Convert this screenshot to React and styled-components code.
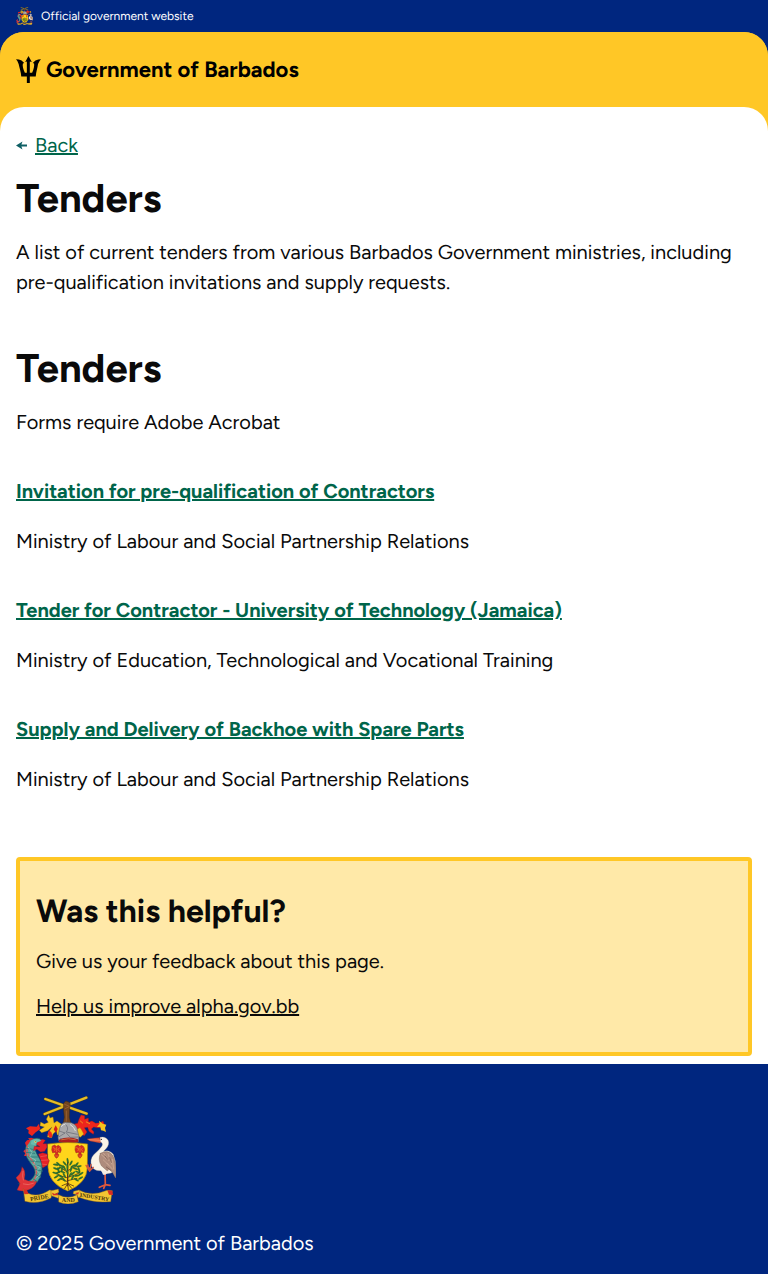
import React from "react";
import styled, { createGlobalStyle } from "styled-components";

const GlobalStyle = createGlobalStyle`
  *, *::before, *::after { box-sizing: border-box; }
  body {
    margin: 0;
    background: #00267f;
    color: #0a0a0a;
    font-family: Figtree, Lato, "Open Sans", sans-serif;
    font-size: 20px;
    line-height: 30px;
    text-rendering: geometricPrecision;
    -webkit-font-smoothing: antialiased;
  }
`;

const OfficialBar = styled.div`
  display: flex;
  align-items: center;
  gap: 8px;
  height: 32px;
  padding: 0 16px;
  background: #00267f;
  color: #fff;
  font-size: 12px;
  line-height: 16px;
`;

const Header = styled.header`
  display: flex;
  padding: 24px 16px 48px;
  border-radius: 24px 24px 0 0;
  background: #ffc726;
`;

const Brand = styled.a`
  display: flex;
  align-items: center;
  gap: 5px;
  height: 27px;
  color: #000;
  font-size: 22px;
  font-weight: 700;
  text-decoration: none;
`;

const Main = styled.main`
  display: flex;
  flex-direction: column;
  margin-top: -24px;
  padding: 23px 16px 8px;
  border-radius: 24px 24px 0 0;
  background: #fff;
`;

const BackLink = styled.a`
  display: flex;
  align-items: center;
  align-self: flex-start;
  gap: 8px;
  color: #00654a;
  text-decoration: none;

  span {
    text-decoration: underline;
    text-decoration-thickness: 2px;
    text-underline-offset: 1px;
  }
`;

const Section = styled.section`
  margin-top: ${(p) => p.$top}px;
`;

const Title = styled.h1`
  margin: 0 0 16px;
  font-size: 40px;
  line-height: 46px;
  font-weight: 700;
`;

const Text = styled.p`
  margin: 0;
`;

const TenderList = styled.div`
  display: flex;
  flex-direction: column;
  gap: 39px;
  margin-top: 39px;
`;

const TenderName = styled.h3`
  margin: 0 0 20px;
  font-size: 20px;
  line-height: 30px;
  font-weight: 700;
`;

const Link = styled.a`
  color: ${(p) => p.$color};
  text-decoration: underline;
  text-decoration-thickness: 2px;
  text-underline-offset: 1px;
`;

const Feedback = styled.aside`
  display: flex;
  flex-direction: column;
  align-items: flex-start;
  gap: 15px;
  margin-top: 63px;
  padding: 30px 16px 31px;
  border: 4px solid #ffc726;
  border-radius: 4px;
  background: #ffe9a8;
`;

const FeedbackTitle = styled.h2`
  margin: 0;
  font-size: 32px;
  line-height: 40px;
  font-weight: 700;
`;

const Footer = styled.footer`
  display: flex;
  flex-direction: column;
  gap: 24px;
  padding: 32px 16px 16px;
  background: #00267f;
  color: #fff;
`;

const Graphic = styled.svg`
  display: block;
  flex: none;
`;

function Trident() {
  return (
    <Graphic width="25" height="27" viewBox="48 168 76 82" fill="#000" aria-hidden="true">
      <path d="M86 168 L96 186 L90 185 V219 H97 C102 209 104 198 103 191 L99 189 L107 182 Q116 178 124 178 Q118 184 115 192 C113 205 109 217 108 230 H90 V250 H81 V230 H64 C63 217 59 205 56 192 Q54 184 48 178 Q57 178 65 182 L73 189 L69 191 C67 198 70 209 75 219 H81 V185 L76 186 Z" />
    </Graphic>
  );
}

function Arrow() {
  return (
    <Graphic width="11" height="9" viewBox="0 0 11 9" fill="#0e5f64" aria-hidden="true">
      <path d="M0 4.5 L6.5 0.5 L5.4 3.5 H11 V5.5 H5.4 L6.5 8.5 Z" />
    </Graphic>
  );
}

const leaves = [
  [179, 218, 80], [170, 226, 50], [189, 225, 120], [162, 234, 20], [151, 228, 40],
  [143, 230, 10], [154, 240, 150], [143, 242, 20], [169, 240, 60], [195, 234, 150],
  [206, 229, 130], [213, 235, 170], [202, 242, 20], [189, 244, 110], [178, 236, 90],
  [164, 252, 20], [151, 253, 160], [141, 255, 15], [145, 266, 150], [157, 264, 30],
  [169, 262, 60], [195, 256, 140], [209, 252, 20], [219, 257, 150], [207, 263, 170],
  [194, 268, 120], [155, 274, 150], [167, 274, 50], [205, 275, 30], [218, 270, 150],
  [178, 252, 80], [187, 260, 120], [151, 246, 70], [213, 245, 70], [162, 244, 100],
];

function Flower({ x }) {
  return (
    <g transform={`translate(${x} 171)`}>
      <path d="M1 3 L8 0 13 4 19 1 26 6 28 15 25 23 18 21 17 27 21 29 18 36 14 40 9 36 7 29 11 27 9 22 2 24 -1 15Z" fill="#d82722" stroke="#7a2515" strokeWidth="1" />
      <path d="M4 8 L10 11 8 17 M14 6 V20 M23 8 L18 13 22 19 M11 33 H17" fill="none" stroke="#f3b526" strokeWidth="1.6" />
    </g>
  );
}

function CoatOfArms({ width, height, label }) {
  return (
    <Graphic width={width} height={height} viewBox="24 24 300 324" role="img" aria-label={label}>
      <g strokeLinejoin="round" strokeLinecap="round">
        <g stroke="#5f4b12" strokeWidth="9">
          <path d="M112 33 L236 77" />
          <path d="M110 78 L235 29" />
        </g>
        <g stroke="#e6bd28" strokeWidth="7">
          <path d="M112 33 L236 77" />
          <path d="M110 78 L235 29" />
        </g>
        <path d="M167 46 L173 39 181 41 187 47 185 60 184 88 Q186 99 190 107 H165 L169 88 166 61Z" fill="#73451f" stroke="#3e260f" strokeWidth="1.5" />
        <path d="M170 49 L184 55 M171 62 L182 57 M175 69 V100" stroke="#a66c3a" strokeWidth="2" fill="none" />

        <path d="M164 111 L147 99 138 105 135 87 126 90 122 80 115 94 121 103 109 108 98 102 96 113 109 117 94 127 101 134 119 128 132 117 122 133 118 147 131 149 135 138 145 128 148 141 156 141Z" fill="#f5c51c" stroke="#9c6d0d" strokeWidth="1" />
        <path d="M93 107 L86 116 66 115 54 121 62 127 61 136 72 144 83 133 97 123 94 114Z" fill="#ee271d" />
        <path d="M123 126 L119 139 125 150 133 146 131 134Z" fill="#ee271d" />
        <path d="M143 112 L137 124 144 135 149 123Z" fill="#d51e18" />

        <path d="M196 109 L209 106 213 94 219 81 230 83 230 94 241 90 242 102 252 99 263 106 276 104 285 99 290 112 281 119 269 119 257 117 250 123 258 132 256 139 243 130 239 118 229 119 237 132 229 143 218 137 218 126 208 129 205 121Z" fill="#ed251c" stroke="#a5150e" strokeWidth="1" />
        <path d="M273 98 L284 107 295 110 291 120 294 132 286 128 279 127 277 116 267 117 275 107Z" fill="#f5c51c" />
        <path d="M207 124 L216 119 221 126 227 138 217 148 207 142Z" fill="#f5c51c" stroke="#b56e0c" strokeWidth="1" />
        <path d="M217 99 L224 105 M235 102 L245 107" stroke="#f5c51c" strokeWidth="2" />

        <path d="M155 120 Q158 106 171 103 L190 104 Q207 110 208 126 L213 146 211 162 Q180 169 152 158 L150 149Z" fill="#aaa9aa" stroke="#55565e" strokeWidth="1.5" />
        <path d="M171 108 Q185 119 175 132 L208 139 M154 129 L171 135 152 147 M174 134 L187 148 211 147 M157 151 L181 156 207 158" stroke="#626570" strokeWidth="2" fill="none" />
        <path d="M160 115 Q165 109 172 108 M187 110 Q199 117 202 128" stroke="#e2e1df" strokeWidth="3" fill="none" />
        <path d="M153 155 Q181 143 210 154 L211 162 Q181 171 152 161Z" fill="#a91c20" />
        <path d="M161 155 Q181 149 202 155" stroke="#d69c45" strokeWidth="2" fill="none" />

        <path d="M119 168 Q180 159 239 168 L238 239 Q237 285 179 309 Q121 285 120 239Z" fill="#ffd51b" stroke="#9a7410" strokeWidth="2" />
        <Flower x={132} />
        <Flower x={202} />
        <g fill="none" stroke="#593617">
          <path d="M179 222 V293" strokeWidth="4" />
          <path d="M179 270 Q161 266 147 258 M179 268 Q201 262 214 255 M179 253 L155 237 M179 248 L207 232 M179 281 L160 274 M179 278 L207 271" strokeWidth="2.5" />
          <path d="M179 286 L162 293 M179 286 L170 302 M179 286 L181 305 M179 286 L191 301 M179 286 L197 294" strokeWidth="2.5" />
        </g>
        <g fill="#2e7130" stroke="#1f5424" strokeWidth="0.5">
          {leaves.map(([x, y, a]) => (
            <ellipse key={`${x}-${y}`} cx={x} cy={y} rx="8" ry="2.6" transform={`rotate(${a} ${x} ${y})`} />
          ))}
        </g>

        <path d="M91 198 L104 194 119 199 117 208 124 218 119 231 105 239 92 235 99 220Z" fill="#e62228" stroke="#8c1a1c" strokeWidth="1.2" />
        <path d="M98 206 L116 203 M99 217 L120 216 M99 228 L116 230" stroke="#f07868" strokeWidth="1.5" />
        <path d="M55 170 Q57 153 75 152 Q91 146 104 158 L95 168 84 174 Q78 187 90 204 Q107 228 100 256 Q94 284 70 294 Q48 303 32 287 L50 283 Q72 279 79 262 Q86 247 70 229 Q53 208 51 190Z" fill="#58a59b" stroke="#22545c" strokeWidth="2" />
        <path d="M58 176 Q53 196 71 216 Q91 241 84 265 Q78 281 62 287" stroke="#d05a5c" strokeWidth="4" fill="none" />
        <path d="M56 181 L74 184 M54 193 L80 196 M59 207 L89 207 M67 219 L97 222 M78 231 L102 235 M83 245 L103 249 M83 260 L98 267 M73 271 L88 281" stroke="#32807f" strokeWidth="3" />
        <path d="M61 178 L72 193 65 207 83 216 77 229 96 238 87 248 97 258 83 270" stroke="#a9cfc2" strokeWidth="1.7" fill="none" />
        <path d="M55 176 L51 164 57 157 65 155 60 151 70 149 78 152 68 157 63 165Z" fill="#e32629" />
        <path d="M88 160 L104 154 112 157 105 167 116 167 117 178 110 190 98 192 87 184 76 188 79 175 96 176 85 169Z" fill="#e52329" stroke="#8b1720" strokeWidth="1" />
        <path d="M71 157 Q88 149 101 158 L88 163 81 172 68 169Z" fill="#68bbae" />
        <circle cx="82" cy="161" r="3" fill="#f6d55b" /><circle cx="83" cy="161" r="1.3" fill="#172e30" />
        <path d="M42 237 Q52 246 51 260 L49 274 Q64 283 86 280 Q82 298 62 305 Q44 312 27 306 L36 287 24 269 34 259 Q41 250 42 237Z" fill="#df3438" stroke="#931e25" strokeWidth="1" />
        <path d="M52 184 L46 190 52 196 48 203 57 205" fill="#df3438" />
        <path d="M45 250 Q42 264 46 276 M46 288 Q60 293 76 286" stroke="#ef7971" strokeWidth="2" fill="none" />

        <path d="M276 148 Q293 143 301 158 Q305 168 296 180 L287 190 Q304 184 316 199 Q324 218 323 238 L323 270 315 253 307 256 Q290 261 278 248 Q259 250 251 235 Q244 214 257 200 Q272 188 282 174 Q286 164 276 162Z" fill="#faf4e8" stroke="#89847b" strokeWidth="1" />
        <path d="M275 149 L261 150 237 153 246 159 277 165Z" fill="#e65b3e" stroke="#9c3724" strokeWidth="1" />
        <path d="M243 155 L275 157" stroke="#ffb174" strokeWidth="1.5" />
        <circle cx="280" cy="154" r="2" fill="#111" />
        <path d="M277 196 Q300 183 314 202 Q326 220 323 270 L313 253 303 244 298 249 280 233Q269 216 277 196Z" fill="#ae8c7d" stroke="#675347" strokeWidth="1" />
        <path d="M280 200 L294 213 M286 195 L303 218 M300 197 L311 228 M286 216 L303 232 M297 226 L314 244 M313 214 L317 243" stroke="#d3b09c" strokeWidth="2" />
        <path d="M291 204 L299 214 M305 209 L310 223 M295 237 L309 247" stroke="#6e5147" strokeWidth="2" />
        <path d="M256 238 L245 249 243 239 M245 250 L234 232 M244 248 L239 229 M245 249 L249 229" stroke="#d6583d" strokeWidth="4" fill="none" />
        <path d="M291 254 L292 290 M292 290 L274 298 M292 290 L287 301 M292 290 L306 292" stroke="#df583b" strokeWidth="5" fill="none" />
        <path d="M279 245 L285 260 292 260 301 253Z" fill="#f3eee4" />

        <g fill="#f3c532" stroke="#8b5f12" strokeWidth="1.2">
          <path d="M46 303 L60 316 Q88 330 125 306 L134 308 129 330 Q88 351 51 340Z" />
          <path d="M152 320 Q179 335 207 320 L211 341 Q180 354 152 342Z" />
          <path d="M213 306 Q251 327 297 307 L313 308 308 341 Q256 346 213 328Z" />
          <path d="M130 308 L151 303 153 313 142 318 153 322 151 331 130 323Z" />
          <path d="M213 306 L197 310 195 317 207 320 211 329 219 324Z" />
        </g>
        <path d="M46 303 L57 307 62 318 49 319Z M298 307 L313 308 315 321 303 320Z M132 314 L141 318 150 314 149 322 135 322Z M213 313 L201 315 210 320Z" fill="#d92e22" />
        <g fill="#49350c" fontFamily="Liberation Serif, serif" fontSize="18" fontWeight="700" textAnchor="middle">
          <text x="94" y="335" transform="rotate(-10 94 329)">PRIDE</text>
          <text x="181" y="342">AND</text>
          <text x="260" y="333" fontSize="17" transform="rotate(9 260 327)">INDUSTRY</text>
        </g>
      </g>
    </Graphic>
  );
}

const tenders = [
  { name: "Invitation for pre-qualification of Contractors", ministry: "Ministry of Labour and Social Partnership Relations" },
  { name: "Tender for Contractor - University of Technology (Jamaica)", ministry: "Ministry of Education, Technological and Vocational Training" },
  { name: "Supply and Delivery of Backhoe with Spare Parts", ministry: "Ministry of Labour and Social Partnership Relations" },
];

const Page = styled.div`
  background: #00267f;
`;

const Sheet = styled.div`
  border-radius: 24px 24px 0 0;
  background: #ffc726;
`;

export default function App() {
  return (
    <Page>
      <GlobalStyle />
      <OfficialBar>
        <CoatOfArms width="17" height="18" label="Coat of arms" />
        <span>Official government website</span>
      </OfficialBar>
      <Sheet>
        <Header>
          <Brand href="#home">
            <Trident />
            <span>Government of Barbados</span>
          </Brand>
        </Header>
        <Main>
          <BackLink href="#back">
            <Arrow />
            <span>Back</span>
          </BackLink>
          <Section $top={15}>
            <Title>Tenders</Title>
            <Text>
              A list of current tenders from various Barbados Government ministries, including
              pre-qualification invitations and supply requests.
            </Text>
          </Section>
          <Section $top={48}>
            <Title>Tenders</Title>
            <Text>Forms require Adobe Acrobat</Text>
            <TenderList>
              {tenders.map((t) => (
                <article key={t.name}>
                  <TenderName>
                    <Link href="#tender" $color="#00654a">{t.name}</Link>
                  </TenderName>
                  <Text>{t.ministry}</Text>
                </article>
              ))}
            </TenderList>
          </Section>
          <Feedback>
            <FeedbackTitle>Was this helpful?</FeedbackTitle>
            <Text>Give us your feedback about this page.</Text>
            <Link href="#feedback" $color="#0a0a0a">Help us improve alpha.gov.bb</Link>
          </Feedback>
        </Main>
      </Sheet>
      <Footer>
        <CoatOfArms width="100" height="108" label="Coat of arms of Barbados" />
        <Text>© 2025 Government of Barbados</Text>
      </Footer>
    </Page>
  );
}
